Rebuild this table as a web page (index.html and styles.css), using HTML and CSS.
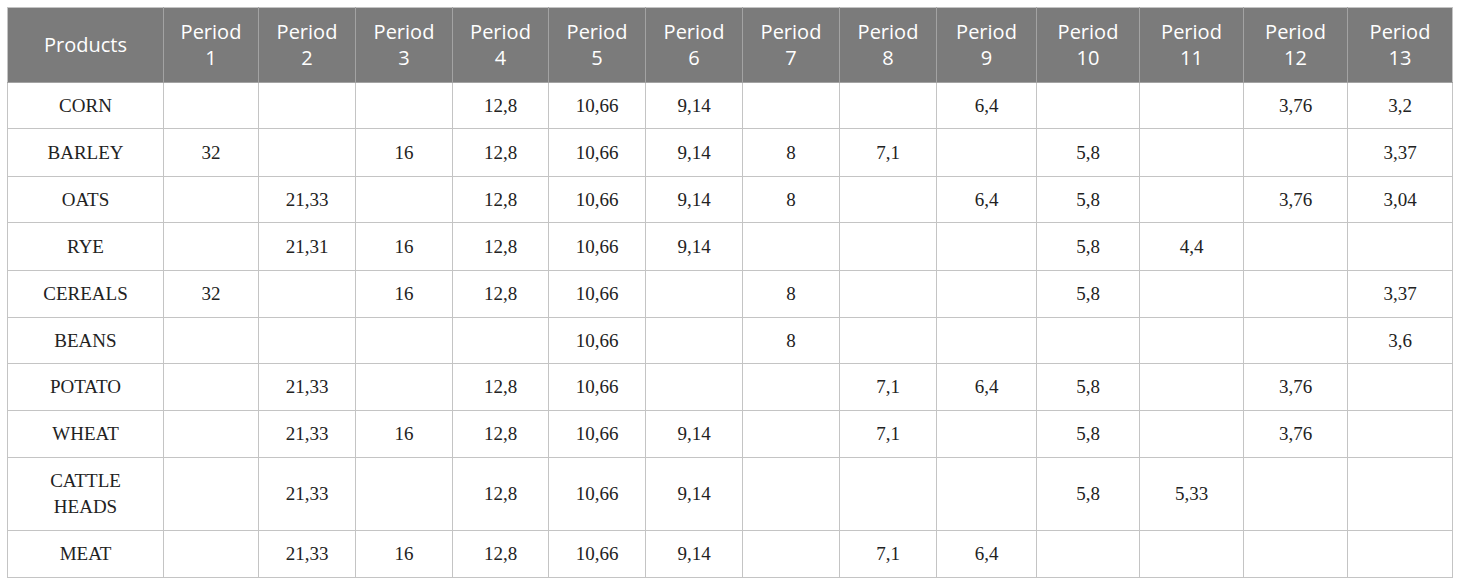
FILE: index.html
```html
<!DOCTYPE html>
<html lang="en">
<head>
<meta charset="utf-8">
<title>Products by period</title>
<link rel="stylesheet" href="styles.css">
</head>
<body>
<table class="data">
  <colgroup>
    <col class="c-prod">
    <col class="c-95"><col class="c-97"><col class="c-97"><col class="c-96"><col class="c-97"><col class="c-97"><col class="c-97"><col class="c-97">
    <col class="c-100"><col class="c-103"><col class="c-104"><col class="c-104"><col class="c-105">
  </colgroup>
  <thead>
    <tr>
      <th>Products</th>
      <th>Period<br>1</th><th>Period<br>2</th><th>Period<br>3</th><th>Period<br>4</th><th>Period<br>5</th><th>Period<br>6</th><th>Period<br>7</th><th>Period<br>8</th><th>Period<br>9</th><th>Period<br>10</th><th>Period<br>11</th><th>Period<br>12</th><th>Period<br>13</th>
    </tr>
  </thead>
  <tbody>
    <tr class="r46"><td>CORN</td><td></td><td></td><td></td><td>12,8</td><td>10,66</td><td>9,14</td><td></td><td></td><td>6,4</td><td></td><td></td><td>3,76</td><td>3,2</td></tr>
    <tr class="r48"><td>BARLEY</td><td>32</td><td></td><td>16</td><td>12,8</td><td>10,66</td><td>9,14</td><td>8</td><td>7,1</td><td></td><td>5,8</td><td></td><td></td><td>3,37</td></tr>
    <tr class="r46"><td>OATS</td><td></td><td>21,33</td><td></td><td>12,8</td><td>10,66</td><td>9,14</td><td>8</td><td></td><td>6,4</td><td>5,8</td><td></td><td>3,76</td><td>3,04</td></tr>
    <tr class="r48"><td>RYE</td><td></td><td>21,31</td><td>16</td><td>12,8</td><td>10,66</td><td>9,14</td><td></td><td></td><td></td><td>5,8</td><td>4,4</td><td></td><td></td></tr>
    <tr><td>CEREALS</td><td>32</td><td></td><td>16</td><td>12,8</td><td>10,66</td><td></td><td>8</td><td></td><td></td><td>5,8</td><td></td><td></td><td>3,37</td></tr>
    <tr class="r46"><td>BEANS</td><td></td><td></td><td></td><td></td><td>10,66</td><td></td><td>8</td><td></td><td></td><td></td><td></td><td></td><td>3,6</td></tr>
    <tr><td>POTATO</td><td></td><td>21,33</td><td></td><td>12,8</td><td>10,66</td><td></td><td></td><td>7,1</td><td>6,4</td><td>5,8</td><td></td><td>3,76</td><td></td></tr>
    <tr><td>WHEAT</td><td></td><td>21,33</td><td>16</td><td>12,8</td><td>10,66</td><td>9,14</td><td></td><td>7,1</td><td></td><td>5,8</td><td></td><td>3,76</td><td></td></tr>
    <tr class="r73"><td>CATTLE<br>HEADS</td><td></td><td>21,33</td><td></td><td>12,8</td><td>10,66</td><td>9,14</td><td></td><td></td><td></td><td>5,8</td><td>5,33</td><td></td><td></td></tr>
    <tr><td>MEAT</td><td></td><td>21,33</td><td>16</td><td>12,8</td><td>10,66</td><td>9,14</td><td></td><td>7,1</td><td>6,4</td><td></td><td></td><td></td><td></td></tr>
  </tbody>
</table>
</body>
</html>
```

FILE: styles.css
```css
html, body {
  margin: 0;
  background: #ffffff;
}
body {
  padding: 7px;
}
.data {
  border-collapse: collapse;
  table-layout: fixed;
  width: 1446px;
  border: 1px solid #c4c4c4;
}
.c-prod { width: 156px; }
.c-95 { width: 95px; }
.c-96 { width: 96px; }
.c-97 { width: 97px; }
.c-100 { width: 100px; }
.c-103 { width: 103px; }
.c-104 { width: 104px; }
.c-105 { width: 105px; }

.data th {
  background: #7b7b7b;
  color: #ffffff;
  font-family: "Open Sans", "Noto Sans", sans-serif;
  font-weight: 400;
  font-size: 20px;
  line-height: 26px;
  height: 74px;
  padding: 0 4px;
  text-align: center;
  vertical-align: middle;
  border: 1px solid #a3a3a3;
  border-top-color: #c4c4c4;
}
.data th:first-child { border-left-color: #c4c4c4; }
.data th:last-child { border-right-color: #c4c4c4; }

.data td {
  font-family: "Liberation Serif", "Times New Roman", serif;
  font-size: 19px;
  line-height: 26px;
  color: #222222;
  text-align: center;
  vertical-align: middle;
  padding: 0 4px;
  height: 46px;
  border: 1px solid #c4c4c4;
}
.data tr.r48 td { height: 47px; }
.data tr.r46 td { height: 45px; }
.data tr.r73 td { height: 72px; }
```
